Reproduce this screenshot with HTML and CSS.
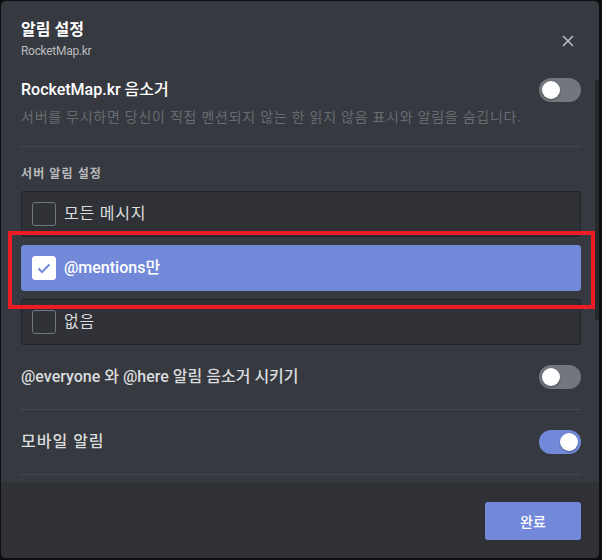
FILE: index.html
```html
<!DOCTYPE html>
<html lang="ko">
<head>
  <meta charset="UTF-8" />
  <title>알림 설정</title>
  <link rel="stylesheet" href="styles.css">
</head>
<body>
  <div class="modal">
    <!-- Шапка -->
    <div class="modal-header">
      <div class="title">알림 설정</div>
      <div class="subtitle">RocketMap.kr</div>
      <svg class="close" width="12" height="12" viewBox="0 0 12 12">
        <path d="M1 1L11 11M11 1L1 11" stroke="#b9bbbe" stroke-width="1.6" fill="none"/>
      </svg>
    </div>

    <!-- Контент -->
    <div class="modal-content">
      <div class="row">
        <div class="row-label strong">RocketMap.kr 음소거</div>
        <div class="toggle"><span class="knob"></span></div>
      </div>
      <div class="note">서버를 무시하면 당신이 직접 멘션되지 않는 한 읽지 않음 표시와 알림을 숨깁니다.</div>
      <div class="divider"></div>

      <div class="section-title">서버 알림 설정</div>
      <div class="options">
        <div class="option">
          <span class="checkbox"></span>
          <span class="option-text">모든 메시지</span>
        </div>
        <div class="option selected">
          <span class="checkbox">
            <svg width="24" height="24" viewBox="0 0 24 24">
              <path d="M6.5 12.5l3.5 3.5L17.5 8.5" stroke="#7289da" stroke-width="2" fill="none"/>
            </svg>
          </span>
          <span class="option-text">@mentions만</span>
        </div>
        <div class="option">
          <span class="checkbox"></span>
          <span class="option-text">없음</span>
        </div>
      </div>

      <div class="row spaced">
        <div class="row-label">@everyone 와 @here 알림 음소거 시키기</div>
        <div class="toggle"><span class="knob"></span></div>
      </div>
      <div class="divider"></div>

      <div class="row spaced">
        <div class="row-label wide">모바일 알림</div>
        <div class="toggle on"><span class="knob"></span></div>
      </div>
      <div class="divider"></div>

      <div class="scroll-thumb"></div>
    </div>

    <!-- Футер -->
    <div class="modal-footer">
      <button class="done">완료</button>
    </div>
  </div>

  <!-- Красная рамка -->
  <div class="highlight"></div>
</body>
</html>
```

FILE: styles.css
```css
:root {
  --bg: #36393f;
  --bg-dark: #2f3136;
  --border: #202225;
  --blurple: #7289da;
  --muted: #b9bbbe;
  --dim: #686b71;
  --text: #dcddde;
}

body {
  margin: 0;
  padding: 1px 3px 2px 1px;
  background: #0d0e10;
  font-family: Roboto, "Noto Sans CJK KR", sans-serif;
  color: var(--text);
  position: relative;
}

.modal {
  height: 557px;
  background: var(--bg);
  border-radius: 5px;
  display: flex;
  flex-direction: column;
  overflow: hidden;
  position: relative;
}

.modal-header {
  padding: 19px 20px 0 20px;
  position: relative;
}

.title {
  font-size: 16px;
  line-height: 20px;
  font-weight: bold;
  color: #fff;
}

.subtitle {
  margin-top: 3px;
  font-size: 12px;
  line-height: 16px;
  color: var(--muted);
  letter-spacing: -0.3px;
}

.close {
  position: absolute;
  top: 34px;
  right: 25px;
}

.modal-content {
  flex: 1;
  padding: 19px 18px 0 20px;
  position: relative;
  overflow: hidden;
}

.row {
  display: flex;
  align-items: center;
  justify-content: space-between;
  height: 24px;
}

.row.spaced {
  margin-top: 20px;
}

.row-label {
  font-size: 16px;
  line-height: 24px;
  font-weight: 500;
  color: var(--text);
}

.row-label.strong {
  color: #fff;
}

.row-label.wide {
  letter-spacing: 1px;
}

.toggle {
  width: 42px;
  height: 24px;
  border-radius: 12px;
  background: #72767d;
  position: relative;
}

.knob {
  position: absolute;
  top: 3px;
  left: 3px;
  width: 18px;
  height: 18px;
  border-radius: 50%;
  background: #fff;
  box-shadow: 0 1px 2px rgba(0, 0, 0, 0.35);
}

.toggle.on {
  background: var(--blurple);
}

.toggle.on .knob {
  left: auto;
  right: 3px;
}

.note {
  margin-top: 5px;
  font-size: 14px;
  line-height: 20px;
  letter-spacing: 0.75px;
  color: var(--dim);
}

.divider {
  margin-top: 19px;
  height: 1px;
  background: #45484e;
}

.row.spaced + .divider {
  margin-top: 20px;
}

.section-title {
  margin-top: 19px;
  font-size: 12px;
  line-height: 16px;
  font-weight: bold;
  letter-spacing: 1.1px;
  color: var(--muted);
}

.options {
  margin-top: 9px;
  display: flex;
  flex-direction: column;
  gap: 8px;
}

.option {
  height: 44px;
  display: flex;
  align-items: center;
  gap: 8px;
  padding: 0 10px;
  background: var(--bg-dark);
  border: 1px solid var(--border);
  border-radius: 3px;
}

.option.selected {
  background: var(--blurple);
  border-color: var(--blurple);
}

.checkbox {
  width: 22px;
  height: 22px;
  border: 1px solid #72767d;
  border-radius: 3px;
  position: relative;
  flex-shrink: 0;
}

.option.selected .checkbox {
  background: #fff;
  border-color: #fff;
}

.checkbox svg {
  position: absolute;
  top: -1px;
  left: -1px;
}

.option-text {
  font-size: 16px;
  line-height: 20px;
  letter-spacing: 0.8px;
  color: var(--text);
}

.option.selected .option-text {
  color: #fff;
  font-weight: 500;
  letter-spacing: 0;
}

.scroll-thumb {
  position: absolute;
  top: 21px;
  right: 0;
  width: 4px;
  height: 240px;
  border-radius: 2px;
  background: #26282c;
}

.modal-footer {
  height: 76px;
  box-sizing: border-box;
  padding: 20px 18px 18px 20px;
  background: var(--bg-dark);
  display: flex;
  justify-content: flex-end;
}

.done {
  width: 96px;
  height: 38px;
  border: none;
  border-radius: 3px;
  background: var(--blurple);
  color: #fff;
  font-family: inherit;
  font-size: 14px;
  font-weight: 500;
}

/* Аннотация */
.highlight {
  position: absolute;
  left: 8px;
  top: 231px;
  width: 579px;
  height: 70px;
  border: 4px solid #ed1c24;
}
```
